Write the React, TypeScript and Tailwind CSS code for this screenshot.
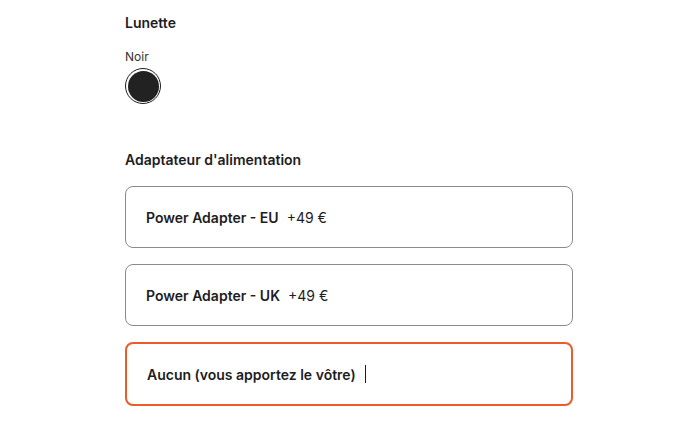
import React from "react";

export default function App() {
  return (
    <div className="min-h-[448px] w-full bg-white" style={{ fontFamily: "Inter, 'Noto Sans', sans-serif" }}>
      <div className="ml-[125px] w-[448px] pt-[13px] text-[#1d1d1f]">
        <h2 className="text-[14px] font-semibold leading-[20px]">Lunette</h2>
        <div className="mt-[16px] text-[12px] leading-[16px] text-[#333]">Noir</div>
        <div className="mt-[3px] flex">
          <div className="flex h-[36px] w-[36px] items-center justify-center rounded-full border border-[#1d1d1f] bg-white">
            <div className="h-[31px] w-[31px] rounded-full bg-[#222]" />
          </div>
        </div>
        <h2 className="mt-[46px] text-[14px] font-semibold leading-[20px]">Adaptateur d'alimentation</h2>
        <div className="mt-[16px] flex flex-col gap-[16px]">
          <div className="flex h-[62px] items-center rounded-[8px] border border-[#8a8a8a] px-[20px] text-[14px]">
            <span className="font-semibold">Power Adapter - EU</span>
            <span className="ml-[8px]">+49 €</span>
          </div>
          <div className="flex h-[62px] items-center rounded-[8px] border border-[#8a8a8a] px-[20px] text-[14px]">
            <span className="font-semibold">Power Adapter - UK</span>
            <span className="ml-[8px]">+49 €</span>
          </div>
          <div className="flex h-[64px] items-center rounded-[8px] border-2 border-[#ef5a2a] px-[20px] text-[14px]">
            <span className="font-semibold">Aucun (vous apportez le vôtre)</span>
            <span className="ml-[9px] h-[18px] w-[1px] bg-[#1d1d1f]" />
          </div>
        </div>
      </div>
    </div>
  );
}
